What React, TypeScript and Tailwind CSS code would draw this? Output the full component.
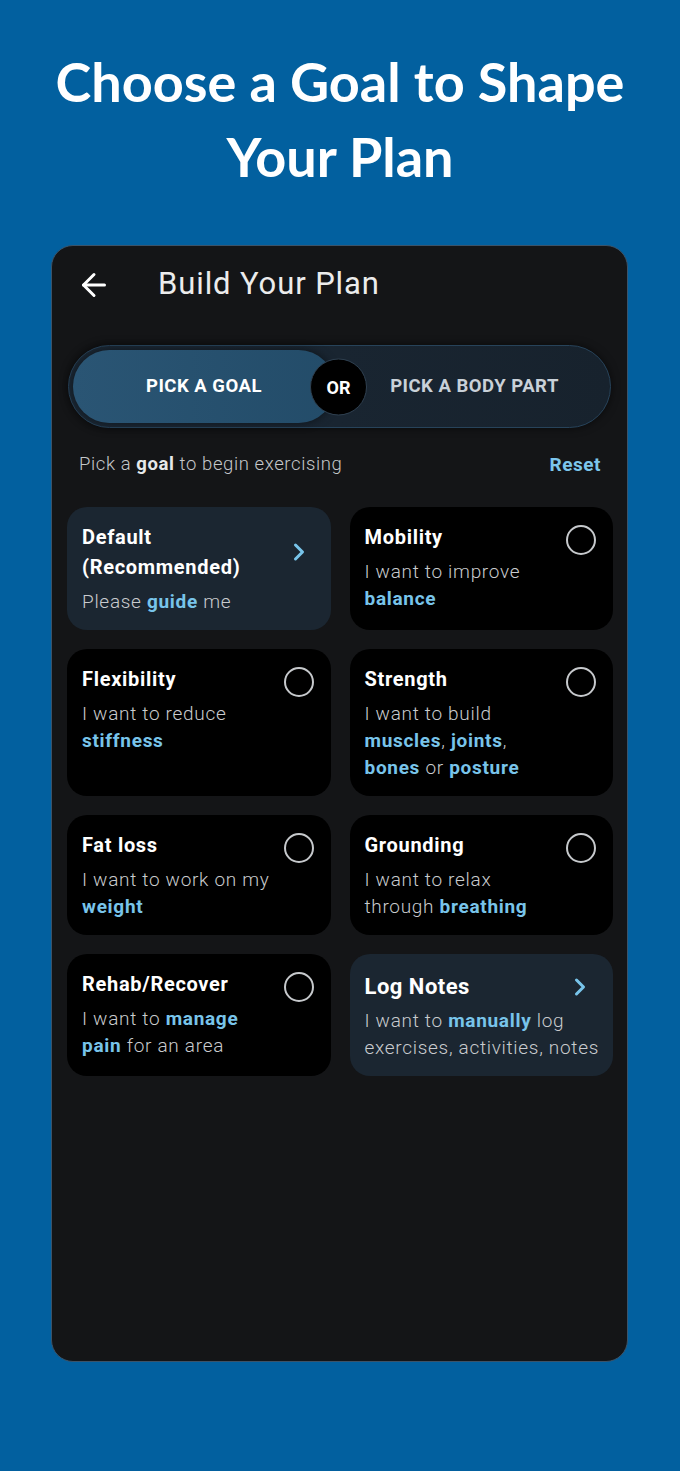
import { ArrowLeft, ChevronRight } from "lucide-react";

type Part = { t: string; hl?: boolean; br?: boolean };

interface Goal {
  title: string;
  desc: Part[];
  kind: "radio" | "chevron";
  big?: boolean;
}

const goals: Goal[] = [
  {
    title: "Default\n(Recommended)",
    desc: [{ t: "Please " }, { t: "guide", hl: true }, { t: " me" }],
    kind: "chevron",
  },
  {
    title: "Mobility",
    desc: [{ t: "I want to improve" }, { t: "", br: true }, { t: "balance", hl: true }],
    kind: "radio",
  },
  {
    title: "Flexibility",
    desc: [{ t: "I want to reduce" }, { t: "", br: true }, { t: "stiffness", hl: true }],
    kind: "radio",
  },
  {
    title: "Strength",
    desc: [
      { t: "I want to build" },
      { t: "", br: true },
      { t: "muscles", hl: true },
      { t: ", " },
      { t: "joints", hl: true },
      { t: "," },
      { t: "", br: true },
      { t: "bones", hl: true },
      { t: " or " },
      { t: "posture", hl: true },
    ],
    kind: "radio",
  },
  {
    title: "Fat loss",
    desc: [{ t: "I want to work on my" }, { t: "", br: true }, { t: "weight", hl: true }],
    kind: "radio",
  },
  {
    title: "Grounding",
    desc: [{ t: "I want to relax" }, { t: "", br: true }, { t: "through " }, { t: "breathing", hl: true }],
    kind: "radio",
  },
  {
    title: "Rehab/Recover",
    desc: [
      { t: "I want to " },
      { t: "manage", hl: true },
      { t: "", br: true },
      { t: "pain", hl: true },
      { t: " for an area" },
    ],
    kind: "radio",
  },
  {
    title: "Log Notes",
    desc: [
      { t: "I want to " },
      { t: "manually", hl: true },
      { t: " log" },
      { t: "", br: true },
      { t: "exercises, activities, notes" },
    ],
    kind: "chevron",
    big: true,
  },
];

const GoalCard = ({ goal }: { goal: Goal }) => {
  const isNav = goal.kind === "chevron";
  return (
    <div
      className={`relative rounded-[20px] pl-[15px] pr-[14px] ${
        goal.big ? "pt-[17px] pb-[15px]" : "pt-[15px] pb-[15px]"
      } ${isNav ? "bg-[#1b2631]" : "bg-black"}`}
    >
      <div className="flex items-center justify-between">
        <h3
          className={`whitespace-pre-line font-bold text-white ${
            goal.big
              ? "text-[22px] leading-[32px] tracking-[0.5px]"
              : "text-[20px] leading-[30px] tracking-[0.7px]"
          }`}
        >
          {goal.title}
        </h3>
        {isNav ? (
          <ChevronRight
            className={`h-[28px] w-[28px] shrink-0 text-[#78c4ea] ${goal.big ? "mr-[5px]" : "mr-[4px]"}`}
            strokeWidth={2.6}
          />
        ) : null}
      </div>
      {goal.kind === "radio" && (
        <span className="absolute right-[17px] top-[18px] h-[30px] w-[30px] rounded-full border-[2.5px] border-[#c6c9cc]" />
      )}
      <p
        className={`${goal.big ? "mt-[4px]" : "mt-[6px]"} whitespace-nowrap text-[19px] font-light leading-[27px] tracking-[0.7px] text-[#c9cbce]`}
      >
        {goal.desc.map((p, i) =>
          p.br ? (
            <br key={i} />
          ) : p.hl ? (
            <span key={i} className="font-bold text-[#78c4ea]">
              {p.t}
            </span>
          ) : (
            <span key={i}>{p.t}</span>
          )
        )}
      </p>
    </div>
  );
};

export default function App() {
  return (
    <div className="min-h-screen bg-[#02609f] pt-[44px] pb-[109px] font-['Roboto',sans-serif]">
      {/* Heading */}
      <h1 className="text-center font-['Lato',sans-serif] text-[54px] font-bold leading-[75px] text-white">
        Choose a Goal to Shape
        <br />
        Your Plan
      </h1>

      {/* Phone */}
      <div className="ml-[51px] mt-[51px] h-[1117px] w-[577px] overflow-hidden rounded-[22px] border border-[#3b5369] bg-[#141517]">
        {/* Top bar */}
        <div className="flex h-[75px] items-center pl-[24px] pt-[2px]">
          <ArrowLeft className="h-[36px] w-[36px] text-white" strokeWidth={2} />
          <h2 className="ml-[46px] text-[31px] font-normal tracking-[0.9px] text-[#ececec]">Build Your Plan</h2>
        </div>

        {/* Toggle */}
        <div className="mx-[16px] mt-[24px] flex h-[83px] items-center rounded-full border border-[#27435a] bg-gradient-to-r from-[#1b2835] to-[#17222d] p-[4px] shadow-[0_0_8px_rgba(0,0,0,0.6)]">
          <div className="relative flex h-full flex-1 items-center">
            <div className="flex h-full w-[262px] items-center justify-center rounded-full bg-gradient-to-r from-[#2a5574] to-[#234c69] shadow-[0_0_10px_rgba(0,0,0,0.5)]">
              <span className="text-[18.5px] font-bold tracking-[0.5px] text-white">PICK A GOAL</span>
            </div>
            <div className="absolute left-[237px] top-1/2 flex h-[57px] w-[57px] -translate-y-1/2 items-center justify-center rounded-full border border-[#2f4050] bg-black">
              <span className="text-[18px] font-bold text-white">OR</span>
            </div>
            <div className="flex flex-1 items-center justify-center pl-[8px]">
              <span className="text-[18.5px] font-bold tracking-[0.5px] text-[#c9d1d8]">PICK A BODY PART</span>
            </div>
          </div>
        </div>

        {/* Hint row */}
        <div className="mt-[23px] flex items-center justify-between pl-[27px] pr-[26px] leading-[27px]">
          <p className="text-[18.5px] font-light tracking-[0.6px] text-[#c4c7ca]">
            Pick a <span className="font-bold text-[#e6e8ea]">goal</span> to begin exercising
          </p>
          <button className="text-[19px] font-bold tracking-[0.5px] text-[#7cc6ec]">Reset</button>
        </div>

        {/* Goal grid */}
        <div className="mt-[29px] grid grid-cols-2 gap-x-[19px] gap-y-[19px] pl-[15px] pr-[14px]">
          {goals.map((g) => (
            <GoalCard key={g.title} goal={g} />
          ))}
        </div>
      </div>
    </div>
  );
}
